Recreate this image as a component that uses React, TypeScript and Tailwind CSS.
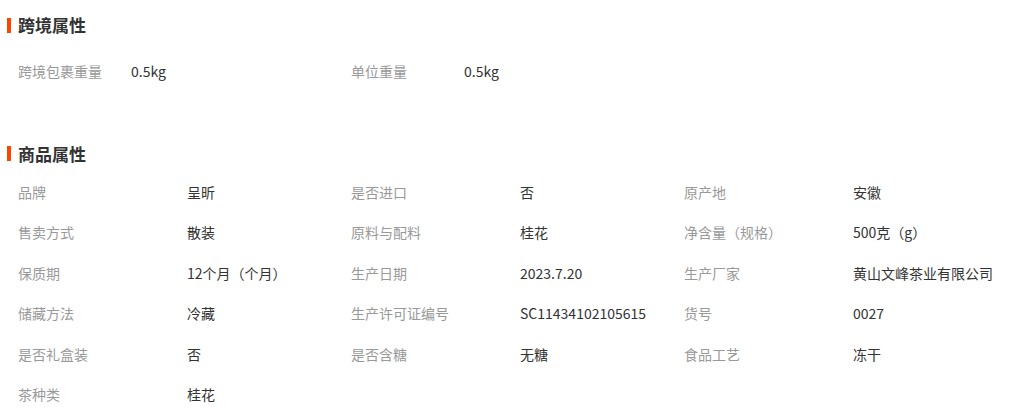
import React from "react";

const crossBorder = [
  ["跨境包裹重量", "0.5kg"],
  ["单位重量", "0.5kg"],
];

const goods = [
  ["品牌", "呈昕"],
  ["是否进口", "否"],
  ["原产地", "安徽"],
  ["售卖方式", "散装"],
  ["原料与配料", "桂花"],
  ["净含量（规格）", "500克（g）"],
  ["保质期", "12个月（个月）"],
  ["生产日期", "2023.7.20"],
  ["生产厂家", "黄山文峰茶业有限公司"],
  ["储藏方法", "冷藏"],
  ["生产许可证编号", "SC11434102105615"],
  ["货号", "0027"],
  ["是否礼盒装", "否"],
  ["是否含糖", "无糖"],
  ["食品工艺", "冻干"],
  ["茶种类", "桂花"],
];

function Title({ text }: { text: string }) {
  return (
    <div className="flex h-[24px] items-center">
      <span className="ml-[7px] h-[15px] w-[4px] bg-[#ff4400]" />
      <span className="ml-[7px] text-[17px] font-bold text-[#333]">{text}</span>
    </div>
  );
}

function Grid({ items, labelW }: { items: string[][]; labelW: string }) {
  return (
    <div className="grid grid-cols-[333px_333px_333px] pl-[18px]">
      {items.map(([k, v]) => (
        <div key={k} className="flex h-[40.4px] items-center text-[14px]">
          <span className={`${labelW} shrink-0 text-[#999]`}>{k}</span>
          <span className="text-[#333]">{v}</span>
        </div>
      ))}
    </div>
  );
}

export default function App() {
  return (
    <div
      className="h-[413px] w-[1035px] overflow-hidden bg-white pt-[13px]"
      style={{ fontFamily: '"Noto Sans CJK SC", "Liberation Sans", sans-serif' }}
    >
      <Title text="跨境属性" />
      <div className="mt-[14px]">
        <Grid items={crossBorder} labelW="w-[113px]" />
      </div>
      <div className="mt-[50px]">
        <Title text="商品属性" />
      </div>
      <div className="mt-[7px]">
        <Grid items={goods} labelW="w-[169px]" />
      </div>
    </div>
  );
}
